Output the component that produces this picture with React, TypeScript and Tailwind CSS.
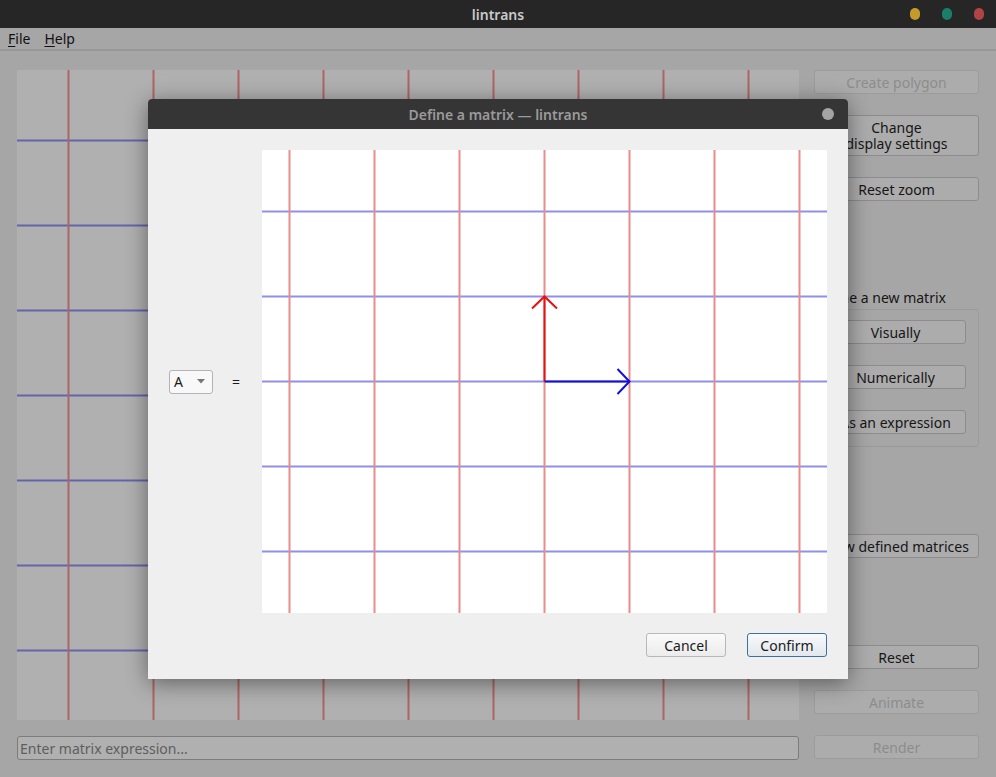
import { ReactNode } from "react";

const font = { fontFamily: '"Noto Sans", "Open Sans", sans-serif' };

const MainGrid = () => {
  const xs = [51, 136, 221, 306, 391, 476, 561, 646, 731];
  const ys = [70, 155, 240, 325, 410, 495, 580];
  return (
    <svg width="782" height="650" className="block">
      {ys.map((y) => (
        <line key={"h" + y} x1="0" x2="782" y1={y + 0.5} y2={y + 0.5} stroke="#6464ad" strokeWidth="2" />
      ))}
      {xs.map((x) => (
        <line key={"v" + x} x1={x + 0.5} x2={x + 0.5} y1="0" y2="650" stroke="#ad6464" strokeWidth="2" />
      ))}
    </svg>
  );
};

const DialogGrid = () => {
  const xs = [27, 112, 197, 282, 367, 452, 537];
  const ys = [61, 146, 231, 316, 401];
  return (
    <svg width="565" height="463" className="block">
      <rect width="565" height="463" fill="#ffffff" />
      {ys.map((y) => (
        <line key={"h" + y} x1="0" x2="565" y1={y + 0.5} y2={y + 0.5} stroke="#9090e6" strokeWidth="2" />
      ))}
      {xs.map((x) => (
        <line key={"v" + x} x1={x + 0.5} x2={x + 0.5} y1="0" y2="463" stroke="#e88c8c" strokeWidth="2" />
      ))}
      <g stroke="#e81010" strokeWidth="2" fill="none">
        <line x1="282.5" y1="231.5" x2="282.5" y2="146.5" />
        <polyline points="270,158.5 282.5,146.5 295,158.5" />
      </g>
      <g stroke="#1010d8" strokeWidth="2" fill="none">
        <line x1="282.5" y1="231.5" x2="367.5" y2="231.5" />
        <polyline points="355.5,219 367.5,231.5 355.5,244" />
      </g>
    </svg>
  );
};

const SideButton = ({ children, disabled, className = "" }: { children: ReactNode; disabled?: boolean; className?: string }) => (
  <div
    className={`flex items-center justify-center rounded-[3px] border text-[14px] leading-[17px] ${
      disabled ? "border-[#9c9c9c] text-[#8c8c8c]" : "border-[#8c8c8c] text-[#161616]"
    } bg-[#acacac] ${className}`}
  >
    {children}
  </div>
);

const DialogButton = ({ children, primary }: { children: ReactNode; primary?: boolean }) => (
  <div
    className={`flex h-[24px] w-[80px] items-center justify-center rounded-[3px] border text-[14px] text-[#1a1a1a] ${
      primary ? "border-[#3e6f9e] bg-gradient-to-b from-[#f7f9fb] to-[#e3e8ee]" : "border-[#b8b8b8] bg-gradient-to-b from-[#fafafa] to-[#ececec]"
    }`}
  >
    {children}
  </div>
);

export default function App() {
  return (
    <div className="relative h-[777px] w-[996px] overflow-hidden bg-[#a6a6a6]" style={font}>
      {/* window title bar */}
      <div className="relative flex h-[28px] items-center justify-center bg-[#262626]">
        <span className="text-[14px] font-semibold text-[#c9c9c9]">lintrans</span>
        <div className="absolute right-[12px] top-[8px] flex gap-[22px]">
          <span className="h-[12px] w-[10px] rounded-full bg-[#c49a2c]" />
          <span className="h-[12px] w-[10px] rounded-full bg-[#1a7e68]" />
          <span className="h-[12px] w-[10px] rounded-full bg-[#b04444]" />
        </div>
      </div>

      {/* menu bar */}
      <div className="flex h-[23px] items-center gap-[14px] border-b-2 border-[#989898] px-[8px] text-[14px] text-[#111]">
        <span>
          <span className="underline underline-offset-2">F</span>ile
        </span>
        <span>
          <span className="underline underline-offset-2">H</span>elp
        </span>
      </div>

      {/* main content */}
      <div className="flex gap-[15px] pl-[17px] pt-[19px]">
        <div className="flex flex-col">
          <div className="h-[650px] w-[782px] bg-[#b0b0b0]">
            <MainGrid />
          </div>
          <div className="mt-[16px] flex h-[24px] w-[782px] items-center rounded-[3px] border border-[#7c7c7c] bg-[#b0b0b0] px-[2px] text-[14px] text-[#5e5e5e]">
            Enter matrix expression...
          </div>
        </div>

        <div className="flex w-[165px] flex-col">
          <SideButton disabled className="h-[24px]">Create polygon</SideButton>
          <SideButton className="mt-[21px] h-[41px] flex-col text-center">
            <span className="block leading-[16px]">Change</span>
            <span className="block leading-[16px]">display settings</span>
          </SideButton>
          <SideButton className="mt-[21px] h-[24px]">Reset zoom</SideButton>

          <div className="mt-[88px] text-[14px] leading-[17px] text-[#161616]">Define a new matrix</div>
          <div className="mt-[3px] flex h-[138px] flex-col gap-[21px] rounded-[3px] border border-[#9a9a9a] pl-[10px] pr-[12px] pt-[10px]">
            <SideButton className="h-[24px]">Visually</SideButton>
            <SideButton className="h-[24px]">Numerically</SideButton>
            <SideButton className="h-[24px]">As an expression</SideButton>
          </div>

          <SideButton className="mt-[87px] h-[24px]">View defined matrices</SideButton>
          <SideButton className="mt-[87px] h-[24px]">Reset</SideButton>
          <SideButton disabled className="mt-[21px] h-[24px]">Animate</SideButton>
          <SideButton disabled className="mt-[21px] h-[24px]">Render</SideButton>
        </div>
      </div>

      {/* modal dialog */}
      <div className="absolute left-[148px] top-[99px] flex h-[580px] w-[700px] flex-col overflow-hidden rounded-t-[4px] bg-[#efefef] shadow-[0_4px_22px_rgba(0,0,0,0.45)]">
        <div className="relative flex h-[30px] items-center justify-center bg-[#353535]">
          <span className="text-[14px] font-semibold text-[#9a9a9a]">Define a matrix — lintrans</span>
          <span className="absolute right-[14px] top-[9px] h-[12px] w-[12px] rounded-full bg-[#a4a4a4]" />
        </div>
        <div className="flex flex-1 flex-col px-[21px] pt-[21px]">
          <div className="flex items-center">
            <div className="flex h-[24px] w-[44px] items-center justify-between rounded-[3px] border border-[#b4b4b4] bg-[#f8f8f8] pl-[4px] pr-[7px] text-[14px] text-[#1a1a1a]">
              <span>A</span>
              <svg width="8" height="5" viewBox="0 0 8 5">
                <polygon points="0,0 8,0 4,4.5" fill="#777" />
              </svg>
            </div>
            <span className="ml-[19px] w-[30px] text-[14px] text-[#1a1a1a]">=</span>
            <DialogGrid />
          </div>
          <div className="mt-[20px] flex justify-end gap-[21px]">
            <DialogButton>Cancel</DialogButton>
            <DialogButton primary>Confirm</DialogButton>
          </div>
        </div>
      </div>
    </div>
  );
}
